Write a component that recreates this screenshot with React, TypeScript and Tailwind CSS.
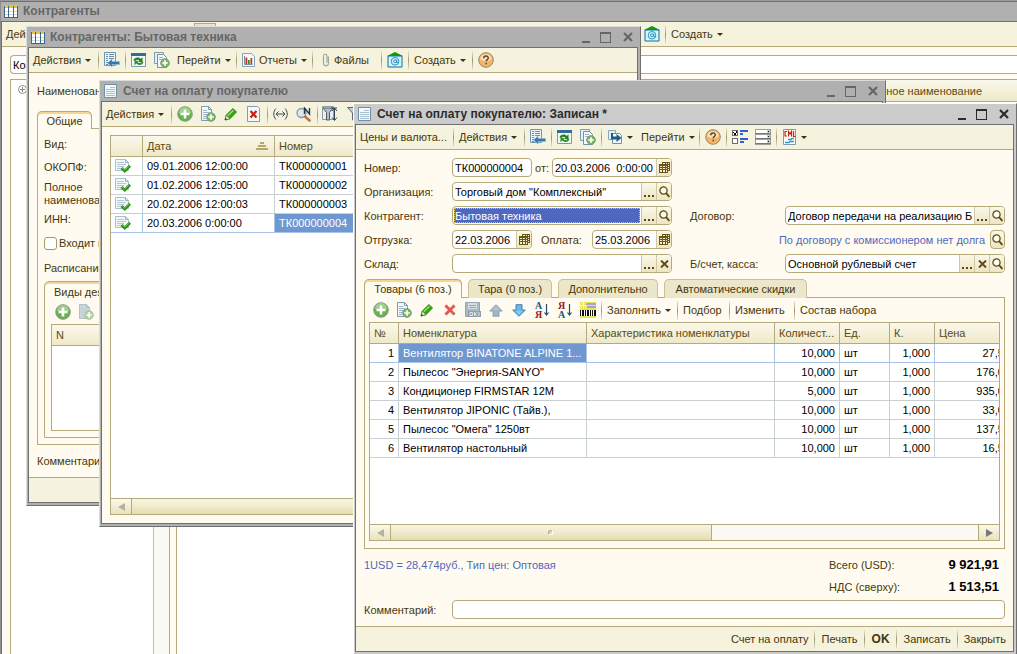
import type { ReactNode } from 'react';
import { clsx } from 'clsx';

type Item = { name: string; qty: string; price: string };
type Invoice = { date: string; number: string };

const items: Item[] = [
  { name: 'Вентилятор BINATONE ALPINE 1...', qty: '10,000', price: '27,50' },
  { name: 'Пылесос "Энергия-SANYO"', qty: '10,000', price: '176,00' },
  { name: 'Кондиционер FIRMSTAR 12М', qty: '5,000', price: '935,00' },
  { name: 'Вентилятор JIPONIC (Тайв.),', qty: '10,000', price: '33,00' },
  { name: 'Пылесос "Омега" 1250вт', qty: '10,000', price: '137,50' },
  { name: 'Вентилятор настольный', qty: '10,000', price: '16,50' },
];

const invoices: Invoice[] = [
  { date: '09.01.2006 12:00:00', number: 'ТК000000001' },
  { date: '01.02.2006 12:05:00', number: 'ТК000000002' },
  { date: '20.02.2006 12:00:03', number: 'ТК000000003' },
  { date: '20.03.2006 0:00:00', number: 'ТК000000004' },
];

// ---------- icons ----------

const TableIcon = () => (
  <svg width="14" height="14" viewBox="0 0 14 14" shapeRendering="crispEdges">
    <path d="M0 3h14v10H0z" fill="#fff" />
    <path d="M0 1h4v3H0zM5 1h4v3H5zM10 1h4v3h-4z" fill="#e9c33c" />
    <path d="M0 2h1v11H0zM4 2h1v11H4zM9 2h1v11H9zM13 2h1v11h-1zM0 13h14v1H0z" fill="#3f6582" />
    <path d="M1 7h3v1H1zM5 7h4v1H5zM10 7h3v1h-3zM1 10h3v1H1zM5 10h4v1H5zM10 10h3v1h-3z" fill="#c9dbe6" />
  </svg>
);

const DocIcon = () => (
  <svg width="14" height="14" viewBox="0 0 14 14">
    <path d="M.5.500h12v13H.5z" fill="#f3f8fb" stroke="#6e91a8" />
    <path d="M6 3.500h5M2 5.500h9M2 7.500h9M2 9.500h9M2 11.500h9" stroke="#a9c2d2" />
  </svg>
);

const PlusIcon = () => (
  <svg width="16" height="16" viewBox="0 0 16 16">
    <circle cx="8" cy="8" r="7.300" fill="#69b04f" stroke="#8a9a84" />
    <path d="M2 7a6 6 0 0 1 12 0c-3 2-8 0-12 0z" fill="#9fd08a" />
    <path d="M6.700 3.500h2.600v3.200h3.200v2.600H9.300v3.200H6.700V9.300H3.500V6.700h3.200z" fill="#fff" />
  </svg>
);

const CopyIcon = ({ dim = false }: { dim?: boolean }) => (
  <svg width="16" height="16" viewBox="0 0 16 16" opacity={dim ? 0.6 : 1}>
    <path d="M1.500.5h7l3 3v11h-10z" fill={dim ? '#a9bcc6' : '#f1f7fa'} stroke="#7d9db1" />
    <path d="M8.500.5v3h3" fill="none" stroke="#7d9db1" />
    <path d="M3 4.500h4M3 6.500h6M3 8.500h5M3 10.500h3M3 12.500h3" stroke="#9cb7c7" />
    <circle cx="11" cy="11" r="4.300" fill="#79b963" stroke="#81957a" />
    <path d="M11 8.200v5.600M8.200 11h5.600" stroke="#fff" strokeWidth="1.700" />
  </svg>
);

const CopiesIcon = () => (
  <svg width="16" height="16" viewBox="0 0 16 16">
    <path d="M.5.500h9v11h-9z" fill="#e6eff4" stroke="#7d9db1" />
    <path d="M3.500 2.500h6l3 3v10h-9z" fill="#f5f9fb" stroke="#6f93a9" />
    <path d="M5 5.500h4M5 7.500h6" stroke="#9cb7c7" />
    <circle cx="11" cy="11" r="4.300" fill="#79b963" stroke="#81957a" />
    <path d="M11 8.200v5.600M8.200 11h5.600" stroke="#fff" strokeWidth="1.700" />
  </svg>
);

const PencilIcon = () => (
  <svg width="14" height="14" viewBox="0 0 14 14">
    <path d="M1 13l1.300-5L9 1.500 12.500 5 6 11.700z" fill="#35a40e" stroke="#237a0a" strokeWidth=".8" />
    <path d="M3.300 8.200L9 2.800l1 1L4.300 9.300z" fill="#9ede76" />
    <path d="M1 13l1.300-5 3.700 3.700z" fill="#dcecc9" stroke="#237a0a" strokeWidth=".6" />
    <path d="M1 13l.6-2 1.400 1.400z" fill="#123c05" />
  </svg>
);

const CrossIcon = () => (
  <svg width="14" height="14" viewBox="0 0 14 14">
    <path d="M1.500 3.500l2-2L7 5l3.500-3.500 2 2L9 7l3.500 3.500-2 2L7 9l-3.500 3.500-2-2L5 7z" fill="#e2584b" stroke="#f0a59c" />
  </svg>
);

const DeleteMarkIcon = () => (
  <svg width="14" height="16" viewBox="0 0 14 16">
    <path d="M.5.500h10l2 2v13H.5z" fill="#f4f8fb" stroke="#7d9db1" />
    <path d="M3.500 5l6 6.500M9.500 5l-6 6.500" stroke="#cf1c12" strokeWidth="2.200" />
  </svg>
);

const ExportIcon = () => (
  <svg width="17" height="16" viewBox="0 0 17 16">
    <path d="M1.500.5h11v13h-11z" fill="#eef5f9" stroke="#7095ac" />
    <path d="M3 2.500h2M6 2.500h5M3 4.500h2M6 4.500h5M3 6.500h2M6 6.500h5M3 8.500h2M3 10.500h2M3 12.500h2" stroke="#6c8fa5" />
    <path d="M4.500 11L9 7v2.500h7.500v3H9V15z" fill="#2f79ad" stroke="#8fb9d6" strokeWidth=".6" />
  </svg>
);

const RefreshIcon = () => (
  <svg width="15" height="14" viewBox="0 0 15 14">
    <path d="M.5.500h14v13H.5z" fill="#f2f7fa" stroke="#7a9bb0" />
    <path d="M0 0h15v3H0z" fill="#2f6f97" />
    <path d="M2.500 7.800c.6-3.600 5-4.300 7.200-1.900L11.500 4.300V9H7.200l1.300-1.400C7.200 6.300 5.200 6.300 4.600 7.800z" fill="#237f1d" />
    <path d="M12.500 8.700c-.6 3.600-5 4.300-7.200 1.900L3.500 12.200V7.700h4L6.500 9c1.300 1.300 3.300 1.200 3.900-.3z" fill="#2f8f29" />
  </svg>
);

const GotoIcon = () => (
  <svg width="15" height="14" viewBox="0 0 15 14">
    <path d="M.5.500h7v9h-7z" fill="#e6eff4" stroke="#8aa8ba" />
    <path d="M4.500 3.500h7l2 2v8h-9z" fill="#f3f8fa" stroke="#6f93a9" />
    <path d="M3 3h2v3.500h3.500V4l5 4-5 4V9.500H3z" fill="#1e5d86" />
  </svg>
);

const ReportIcon = () => (
  <svg width="13" height="14" viewBox="0 0 13 14">
    <path d="M.5.500h9l3 3v10H.5z" fill="#f6fafc" stroke="#86a3b4" />
    <path d="M2.500 3v8.500h8" fill="none" stroke="#7b8f9b" />
    <path d="M3.500 4.500h1.800V11H3.500z" fill="#d02a1c" />
    <path d="M6 7h1.700v4H6z" fill="#2a8f29" />
    <path d="M8.500 5h1.700v6H8.500z" fill="#c2331f" />
  </svg>
);

const ClipIcon = () => (
  <svg width="8" height="14" viewBox="0 0 8 14">
    <path d="M6.500 3.500v6.700a2.300 2.300 0 0 1-5 0V3a1.700 1.700 0 0 1 3.500 0v6.800" fill="none" stroke="#a6a89b" strokeWidth="1.200" />
  </svg>
);

const MailIcon = () => (
  <svg width="16" height="16" viewBox="0 0 16 16">
    <path d="M1 4h14v11H1z" fill="#d3f7fb" stroke="#0f6f9c" />
    <path d="M0 4l8-4 8 4z" fill="#0b9a12" />
    <circle cx="8" cy="9.300" r="3.800" fill="none" stroke="#2384b8" strokeWidth=".9" />
    <circle cx="8" cy="9.300" r="1.500" fill="none" stroke="#2384b8" strokeWidth=".9" />
    <path d="M9.600 7.800v2.600h2" fill="none" stroke="#2384b8" strokeWidth=".9" />
  </svg>
);

const HelpIcon = () => (
  <svg width="16" height="16" viewBox="0 0 16 16">
    <circle cx="8" cy="8" r="7.300" fill="#f2b568" stroke="#a08568" />
    <path d="M2.200 7a5.900 5.900 0 0 1 11.600 0c-3 3-8 3-11.600 0z" fill="#fbdfb8" />
    <path d="M5.700 6.200C5.700 3.300 10.300 3.300 10.300 6c0 1.600-2.100 1.600-2.100 3.300M8.200 10.700v1.600" fill="none" stroke="#5e4632" strokeWidth="1.500" />
  </svg>
);

const WidthIcon = () => (
  <svg width="15" height="12" viewBox="0 0 15 12" fill="none" stroke="#3b4b58">
    <path d="M3 .5C0 3.500 0 8.500 3 11.500M12 .5c3 3 3 8 0 11M3 6h9M5.500 3.500L3 6l2.500 2.500M9.500 3.500L12 6 9.500 8.500" />
  </svg>
);

const FindIcon = () => (
  <svg width="16" height="15" viewBox="0 0 16 15">
    <circle cx="5.500" cy="6" r="4.500" fill="#dbe6ef" stroke="#8c99a6" strokeWidth="1.300" />
    <path d="M9 9.500l4.500 4" stroke="#b5794a" strokeWidth="2.600" strokeLinecap="round" />
    <path d="M8.500 7V1l5 6V1" fill="none" stroke="#1d3a50" strokeWidth="1.400" />
  </svg>
);

const FilterIcon = () => (
  <svg width="17" height="16" viewBox="0 0 17 16">
    <path d="M.5.500h11v13H.5z" fill="#e9f0f4" stroke="#8b9daa" />
    <path d="M1 2h10L7.500 6.500V14h-3V6.500z" fill="#b5bfc6" stroke="#4f5c66" />
    <path d="M9 2h6M12.500 2v12M10 5l2.500-3L15 5M10 11.500l2.500 3 2.500-3" fill="none" stroke="#33444f" />
  </svg>
);

const FunnelIcon = () => (
  <svg width="14" height="14" viewBox="0 0 14 14">
    <path d="M.5.500h13L8.500 6v7h-3V6z" fill="#c6ced4" stroke="#5c6972" />
  </svg>
);

const OptionsIcon = () => (
  <svg width="16" height="14" viewBox="0 0 16 14" shapeRendering="crispEdges">
    <path d="M.5.500h5v5h-5zM.5 8.500h5v5h-5z" fill="#fff" stroke="#6b6b6b" />
    <path d="M1.500 2.500l1.500 2 2-3.500" fill="none" stroke="#000" />
    <path d="M8 0h8v2H8zM8 3h3v2H8zM8 8h8v2H8zM8 11h4v2H8z" fill="#2b62d9" />
  </svg>
);

const ListIcon = () => (
  <svg width="16" height="16" viewBox="0 0 16 16" shapeRendering="crispEdges">
    <path d="M0 0h16v16H0z" fill="#a0a0a0" />
    <path d="M1 1h11v3H1zM1 6h11v3H1zM1 11h11v3H1z" fill="#fff" />
    <path d="M12 1h3v3h-3zM12 6h3v3h-3zM12 11h3v3h-3z" fill="#c9c9c9" />
    <path d="M13 2h1v1h-1zM13 7h1v1h-1zM13 12h1v1h-1z" fill="#111" />
    <path d="M0 4h16v1H0zM0 9h16v1H0zM0 14h16v1H0z" fill="#777" />
  </svg>
);

const CmlIcon = () => (
  <svg width="14" height="16" viewBox="0 0 14 16">
    <path d="M.5.500h12v15H.5z" fill="#fff" stroke="#7f9bab" />
    <path d="M4 2.500H2v4.500h2M5.500 7.500v-5l1.500 2.500 1.500-2.500v5M10.500 2v5.500h2" fill="none" stroke="#c8290a" strokeWidth="1.200" />
    <path d="M5 10.500h3l1-1h2M2 13.500h4l1-1h4" fill="none" stroke="#2798c9" strokeWidth="1.300" />
  </svg>
);

const SaveIcon = () => (
  <svg width="16" height="16" viewBox="0 0 16 16">
    <path d="M.5.500h14v14H.5z" fill="#a9b9c3" stroke="#93a6b2" />
    <path d="M3 1h9v6H3z" fill="#d4dde2" />
    <path d="M4 3.500h7M4 5.500h7" stroke="#9aabb6" />
    <path d="M3 9h13v6H3z" fill="#8d9fac" />
    <path d="M5 10.500h2.500v3H5zM9.500 10v4M12.500 10l-2.500 2 2.500 2M14 10v4" fill="none" stroke="#dfe6ea" />
  </svg>
);

const ArrowIcon = ({ down = false }: { down?: boolean }) => (
  <svg width="14" height="13" viewBox="0 0 14 13" className={down ? 'rotate-180' : ''}>
    <path d="M7 .7L13.300 7H10v5.300H4V7H.7z" fill={down ? '#6fb6e4' : '#a3b4c0'} stroke={down ? '#3f82b3' : '#8fa2b0'} />
    <path d="M7 2.500L10 6H4z" fill={down ? '#8ccbf0' : '#b9c6cf'} />
  </svg>
);

// А / Я sort glyphs
const SortIcon = ({ top, bottom }: { top: string; bottom: string }) => (
  <svg width="16" height="18" viewBox="0 0 16 18">
    <text x="1" y="8" fontSize="10" fontWeight="bold" fontFamily="Liberation Serif, serif" fill={top === 'А' ? '#1d5680' : '#9a1c1c'}>{top}</text>
    <text x="1" y="17" fontSize="10" fontWeight="bold" fontFamily="Liberation Serif, serif" fill={bottom === 'А' ? '#1d5680' : '#9a1c1c'}>{bottom}</text>
    <path d="M12.500 3v11M10.500 11.500l2 2.500 2-2.500" fill="none" stroke="#24506f" strokeWidth="1.200" />
  </svg>
);

const BarcodeIcon = () => (
  <svg width="16" height="16" viewBox="0 0 16 16" shapeRendering="crispEdges">
    <path d="M0 0h16v16H0z" fill="#e8e35a" />
    <path d="M6 1h10v2H6zM7 4h9v2H7z" fill="#a9a4c9" />
    <path d="M3 0h1v7H3zM0 3h7v1H0zM1 1h1v1H1zM5 1h1v1H5zM1 5h1v1H1zM5 5h1v1H5z" fill="#fffce0" />
    <path d="M0 8h16v6H0z" fill="#fff" />
    <path d="M0 8h1v6H0zM2 8h2v6H2zM5 8h1v6H5zM7 8h2v6H7zM10 8h1v6h-1zM12 8h1v6h-1zM14 8h2v6h-2z" fill="#111" />
  </svg>
);

const CalendarIcon = () => (
  <svg width="11" height="12" viewBox="0 0 11 12" shapeRendering="crispEdges">
    <path d="M3 0h8v9H9v2H0V2h3z" fill="#6b5414" />
    <path d="M1 4h2v1H1zM4 4h2v1H4zM7 4h1v1H7zM1 6h2v1H1zM4 6h2v1H4zM7 6h1v1H7zM1 8h2v2H1zM4 8h2v2H4zM7 8h1v2H7zM4 1h2v1H4zM7 1h1v1H7zM9 1h1v1H9zM9 3h1v1H9zM9 5h1v1H9zM9 7h1v1H9z" fill="#f6efcf" />
  </svg>
);

const LensIcon = () => (
  <svg width="11" height="12" viewBox="0 0 11 12" fill="none" stroke="#5e4a0e">
    <circle cx="4.500" cy="4.500" r="3.600" strokeWidth="1.300" fill="#fffdf0" />
    <path d="M7 7l3.300 4" strokeWidth="1.900" />
  </svg>
);

const ClearIcon = () => (
  <svg width="9" height="8" viewBox="0 0 9 8" stroke="#5e4a0e" strokeWidth="1.900">
    <path d="M1 .5l7 7M8 .5l-7 7" />
  </svg>
);

const DotsIcon = () => (
  <svg width="10" height="12" viewBox="0 0 10 12" shapeRendering="crispEdges">
    <path d="M0 9h2v2H0zM4 9h2v2H4zM8 9h2v2H8z" fill="#5e4a0e" />
  </svg>
);

const PostedIcon = () => (
  <svg width="16" height="15" viewBox="0 0 16 15">
    <path d="M.5.500h10l3 3v8H.5z" fill="#f3f8fb" stroke="#a9c0ce" />
    <path d="M10.500.5v3h3" fill="none" stroke="#93aebf" />
    <path d="M2 3.500h7M2 5.500h9M2 7.500h7M2 9.500h4" stroke="#b4c8d4" />
    <path d="M6.500 9l3.300 3L15 6.800" fill="none" stroke="#2c8f16" strokeWidth="2.800" />
    <path d="M7 8.700l2.800 2.400 4.700-4.500" fill="none" stroke="#6ec64c" />
  </svg>
);

const SortMark = () => (
  <svg width="12" height="8" viewBox="0 0 12 8" shapeRendering="crispEdges" fill="#b3a76c">
    <path d="M4 0h4v2H4zM2 3h8v2H2zM0 6h12v2H0z" />
  </svg>
);

const Caret = () => (
  <svg width="6" height="3" viewBox="0 0 6 3" className="ml-1 shrink-0" fill="#3f3208">
    <path d="M0 0h6L3 3z" />
  </svg>
);

// ---------- shared parts ----------

const Sep = () => (
  <span className="flex h-full w-1 shrink-0 items-center justify-center">
    <span className="h-[19px] w-px bg-linear-to-b from-[#ece7cc] via-[#a0976a] to-[#ece7cc]" />
  </span>
);

const IconBtn = ({ label, children }: { label: string; children: ReactNode }) => (
  <button aria-label={label} className="flex h-5 w-[23px] shrink-0 items-center justify-center">
    {children}
  </button>
);

type TextBtnProps = { children: ReactNode; icon?: ReactNode; menu?: boolean; className?: string };

const TextBtn = ({ children, icon, menu = false, className }: TextBtnProps) => (
  <button className={clsx('flex h-5 shrink-0 items-center whitespace-nowrap', className)}>
    {icon && <span className="mr-1">{icon}</span>}
    {children}
    {menu && <Caret />}
  </button>
);

const Toolbar = ({ children }: { children: ReactNode }) => (
  <div className="flex h-[25px] shrink-0 items-center overflow-hidden border-b border-[#b4aa7c] bg-[#f5f2dd]">
    {children}
  </div>
);

const WindowButtons = () => (
  <div className="ml-auto flex items-center gap-2 pr-[5px]">
    <button aria-label="Свернуть" className="flex h-3 w-3 items-end justify-center">
      <span className="h-[2px] w-2 bg-current" />
    </button>
    <button aria-label="Развернуть" className="h-[11px] w-[11px] border border-t-2 border-current" />
    <button aria-label="Закрыть" className="ml-1">
      <svg width="10" height="10" viewBox="0 0 10 10" stroke="currentColor" strokeWidth="2.200">
        <path d="M1 1l8 8M9 1L1 9" />
      </svg>
    </button>
  </div>
);

type WindowProps = { title: string; icon: ReactNode; active?: boolean; className: string; children: ReactNode };

const Window = ({ title, icon, active = false, className, children }: WindowProps) => (
  <section
    className={clsx(
      'absolute flex flex-col border-t border-r border-l border-r-[#707070] pr-[2px] pb-[2px] pl-px',
      active
        ? 'border-t-white border-l-white bg-[#cbcbcb]'
        : 'border-b border-t-[#dcdcdc] border-b-[#707070] border-l-[#dcdcdc] bg-[#b0b0b0]',
      className,
    )}
  >
    <header className={clsx('flex h-5 shrink-0 items-center pl-[3px]', active ? 'text-[#2b2b2b]' : 'text-[#666]')}>
      {icon}
      <h2 className="ml-[5px] text-xs font-bold whitespace-nowrap">{title}</h2>
      <WindowButtons />
    </header>
    <div className="flex min-h-0 flex-1 flex-col border border-[#707070] bg-[#fffbf0]">{children}</div>
  </section>
);

const ScrollArrow = ({ right = false }: { right?: boolean }) => (
  <button
    aria-label={right ? 'Вправо' : 'Влево'}
    className={clsx(
      'flex w-[21px] shrink-0 items-center justify-center border-[#b4aa7c] bg-linear-to-b from-[#fbf9ec] to-[#e9e2bd]',
      right ? 'border-l' : 'border-r',
    )}
  >
    <svg width="7" height="8" viewBox="0 0 7 8" fill={right ? '#777' : '#b5b2a4'}>
      <path d={right ? 'M0 0l7 4-7 4z' : 'M7 0L0 4l7 4z'} />
    </svg>
  </button>
);

type FieldButton = 'dots' | 'lens' | 'clear' | 'calendar';

const fieldIcons: Record<FieldButton, { label: string; icon: ReactNode }> = {
  dots: { label: 'Выбрать', icon: <DotsIcon /> },
  lens: { label: 'Открыть', icon: <LensIcon /> },
  clear: { label: 'Очистить', icon: <ClearIcon /> },
  calendar: { label: 'Календарь', icon: <CalendarIcon /> },
};

type FieldProps = {
  id: string;
  value?: string;
  label?: string;
  buttons?: FieldButton[];
  selected?: boolean;
  className?: string;
};

const Field = ({ id, value = '', label, buttons = [], selected = false, className }: FieldProps) => (
  <div className={clsx('flex h-[19px] overflow-hidden rounded-[4px] border border-[#b4aa7c] bg-white', className)}>
    <input
      id={id}
      aria-label={label}
      defaultValue={value}
      className={clsx(
        'min-w-0 flex-1 outline-none',
        selected ? 'm-px border border-dotted border-[#d8c25a] bg-[#4f68bf] text-white' : 'px-[2px] text-black',
      )}
    />
    {buttons.map((b) => (
      <button
        key={b}
        aria-label={fieldIcons[b].label}
        className="flex w-[15px] shrink-0 items-center justify-center border-l border-[#cfc8a0] bg-linear-to-b from-[#fbf8e8] to-[#ece5c4]"
      >
        {fieldIcons[b].icon}
      </button>
    ))}
  </div>
);

const Row = ({ id, label, width, children }: { id: string; label: string; width: string; children: ReactNode }) => (
  <div className="flex h-[19px] items-center">
    <label htmlFor={id} className={clsx('shrink-0', width)}>{label}</label>
    {children}
  </div>
);

const th =
  'h-[21px] overflow-hidden border-r border-b border-[#b4aa7c] bg-linear-to-b from-[#faf8ec] to-[#efe9c8] pl-1 text-left font-normal whitespace-nowrap text-[#5c4a10]';
const td = 'h-[19px] overflow-hidden border-r border-b pl-1 whitespace-nowrap text-black';

// ---------- windows ----------

const Counterparties = () => (
  <div className="flex h-full flex-col border-l border-[#8e8e8e] bg-[#b0b0b0]">
    <header className="flex h-[21px] shrink-0 items-center border-t border-[#9a9a9a] pl-[3px] text-[#666] shadow-[inset_0_1px_0_#707070]">
      <TableIcon />
      <h1 className="ml-[5px] text-xs font-bold">Контрагенты</h1>
    </header>
    <div className="flex min-h-0 flex-1 flex-col border-t border-l border-[#707070] bg-[#fffbf0]">
      <Toolbar>
        <TextBtn menu className="w-[192px] pl-1">Действия</TextBtn>
        <button aria-label="Иерархия" className="h-[22px] w-[22px] border border-[#b4aa7c] bg-[#ebe4c6]" />
        <span className="w-[424px]" />
        <IconBtn label="Письмо"><MailIcon /></IconBtn>
        <Sep />
        <TextBtn menu className="px-1">Создать</TextBtn>
      </Toolbar>
      <div className="pt-2 pb-[5px] pl-2">
        <Field id="search" label="Поиск" value="Контрагенты" className="rounded-r-none border-r-0" />
      </div>
      <div className="flex min-h-0 flex-1 pl-2">
        <div className="flex w-[160px] shrink-0 border border-b-0 border-[#b4aa7c] bg-white">
          <div className="flex-1 pt-[5px] pl-[7px]">
            <svg width="9" height="9" viewBox="0 0 9 9" fill="none" stroke="#8d8d8d">
              <circle cx="4.500" cy="4.500" r="4" />
              <path d="M2 4.500h5M4.500 2v5" />
            </svg>
          </div>
          <div className="w-4 border-l border-[#c3bc95] bg-[#faf9f3]" />
        </div>
        <div className="ml-[6px] flex-1 border-t border-l border-[#b4aa7c] bg-white">
          <div className="flex h-[22px] items-center justify-end border-b border-[#b4aa7c] bg-linear-to-b from-[#faf8ec] to-[#efe9c8] pr-[35px] text-[#5c4a10]">
            Полное наименование
          </div>
        </div>
      </div>
    </div>
  </div>
);

const CounterpartyCard = () => (
  <Window title="Контрагенты: Бытовая техника" icon={<TableIcon />} className="top-[26px] left-[26px] h-[480px] w-[615px]">
    <Toolbar>
      <TextBtn menu className="w-[67px] pl-1">Действия</TextBtn>
      <Sep />
      <IconBtn label="Записать и закрыть"><ExportIcon /></IconBtn>
      <Sep />
      <IconBtn label="Обновить"><RefreshIcon /></IconBtn>
      <IconBtn label="Скопировать"><CopiesIcon /></IconBtn>
      <TextBtn menu className="w-[61px] pl-1">Перейти</TextBtn>
      <Sep />
      <TextBtn menu icon={<ReportIcon />} className="w-[72px] pl-1">Отчеты</TextBtn>
      <Sep />
      <TextBtn icon={<ClipIcon />} className="w-[65px] pl-2">Файлы</TextBtn>
      <Sep />
      <IconBtn label="Письмо"><MailIcon /></IconBtn>
      <Sep />
      <TextBtn menu className="w-[60px] pl-1">Создать</TextBtn>
      <Sep />
      <IconBtn label="Справка"><HelpIcon /></IconBtn>
    </Toolbar>
    <div className="flex min-h-0 flex-1 flex-col px-2 pt-2">
      <label htmlFor="cp-name" className="h-[30px] leading-5">Наименование:</label>
      <div className="flex h-[18px]">
        <button className="w-[55px] rounded-t-[5px] border border-b-0 border-[#b4aa7c] bg-[#fffbf0] shadow-[inset_0_2px_0_#f7d592]">
          Общие
        </button>
        <span className="flex-1 border-b border-[#b4aa7c]" />
      </div>
      <div className="flex flex-1 flex-col border border-t-0 border-[#b4aa7c] px-[6px] pb-[6px]">
        <span className="mt-[7px] leading-4">Вид:</span>
        <span className="mt-[7px] leading-4">ОКОПФ:</span>
        <span className="mt-[6px] w-[80px] leading-[13px]">Полное наименование:</span>
        <span className="mt-1 leading-4">ИНН:</span>
        <label className="mt-2 flex items-center gap-[2px] leading-4 whitespace-nowrap">
          <input type="checkbox" className="h-[13px] w-[13px] appearance-none rounded-[3px] border border-[#a49a68] bg-white" />
          Входит в холдинг
        </label>
        <span className="mt-[9px] leading-4">Расписание работы:</span>
        <div className="mt-[5px] flex flex-1 flex-col rounded-tl-[5px] border border-[#b4aa7c] px-[6px] pb-[6px] shadow-[inset_0_2px_0_#f3d69b]">
          <span className="pt-[2px] pl-[3px] leading-4">Виды деятельности</span>
          <div className="flex h-6 items-center">
            <IconBtn label="Добавить"><PlusIcon /></IconBtn>
            <IconBtn label="Скопировать"><CopyIcon dim /></IconBtn>
          </div>
          <div className="flex-1 border border-[#b4aa7c] bg-white">
            <div className="flex h-[21px] items-center border-b border-[#b4aa7c] bg-linear-to-b from-[#faf8ec] to-[#efe9c8] pl-1 text-[#5c4a10]">N</div>
          </div>
        </div>
      </div>
      <span className="flex h-8 items-center">Комментарий:</span>
    </div>
    <div className="h-[25px] shrink-0 border-t border-[#b4aa7c] bg-[#f5f2dd]" />
  </Window>
);

const InvoiceList = () => (
  <Window title="Счет на оплату покупателю" icon={<DocIcon />} className="top-[80px] left-[99px] h-[447px] w-[787px]">
    <Toolbar>
      <TextBtn menu className="w-[67px] pl-1">Действия</TextBtn>
      <Sep />
      <IconBtn label="Добавить"><PlusIcon /></IconBtn>
      <IconBtn label="Скопировать"><CopyIcon /></IconBtn>
      <IconBtn label="Изменить"><PencilIcon /></IconBtn>
      <IconBtn label="Пометить на удаление"><DeleteMarkIcon /></IconBtn>
      <Sep />
      <IconBtn label="Интервал"><WidthIcon /></IconBtn>
      <IconBtn label="Найти по номеру"><FindIcon /></IconBtn>
      <Sep />
      <IconBtn label="Отбор и сортировка"><FilterIcon /></IconBtn>
      <IconBtn label="Отбор"><FunnelIcon /></IconBtn>
    </Toolbar>
    <div className="flex min-h-0 flex-1 flex-col p-2">
      <div className="flex min-h-0 flex-1 flex-col border border-[#b4aa7c] bg-white">
        <table className="w-full table-fixed border-separate border-spacing-0">
          <colgroup>
            <col className="w-8" />
            <col className="w-[132px]" />
            <col />
          </colgroup>
          <thead>
            <tr>
              <th className={th} aria-label="Статус" />
              <th className={th}>
                <span className="flex items-center justify-between pr-[6px]">Дата <SortMark /></span>
              </th>
              <th className={th}>Номер</th>
            </tr>
          </thead>
          <tbody>
            {invoices.map((inv, i) => {
              const current = i === invoices.length - 1;
              const line = current ? 'border-[#a9c3e8]' : 'border-[#c8d0d4]';
              return (
                <tr key={inv.number}>
                  <td className={clsx(td, line)}><PostedIcon /></td>
                  <td className={clsx(td, line)}>{inv.date}</td>
                  <td className={clsx(td, line, current && 'bg-[#7098d0] text-white!')}>{inv.number}</td>
                </tr>
              );
            })}
          </tbody>
        </table>
        <div className="mt-auto flex h-4 border-t border-[#b4aa7c]">
          <ScrollArrow />
          <div className="flex-1 bg-linear-to-b from-[#f8f5e4] via-[#f0ebcb] to-[#e3dbb0]" />
        </div>
      </div>
    </div>
  </Window>
);

const tabs = [
  { name: 'Товары (6 поз.)', width: 'w-[98px]' },
  { name: 'Тара (0 поз.)', width: 'w-[84px]' },
  { name: 'Дополнительно', width: 'w-[100px]' },
  { name: 'Автоматические скидки', width: 'w-[143px]' },
];

const InvoiceForm = () => (
  <Window
    active
    title="Счет на оплату покупателю: Записан *"
    icon={<DocIcon />}
    className="top-[103px] right-0 bottom-0 left-[353px]"
  >
    <Toolbar>
      <TextBtn className="w-[95px] pl-1">Цены и валюта...</TextBtn>
      <Sep />
      <TextBtn menu className="w-[67px] pl-1">Действия</TextBtn>
      <Sep />
      <IconBtn label="Записать и закрыть"><ExportIcon /></IconBtn>
      <Sep />
      <IconBtn label="Обновить"><RefreshIcon /></IconBtn>
      <IconBtn label="Скопировать"><CopiesIcon /></IconBtn>
      <Sep />
      <button aria-label="Ввести на основании" className="flex w-[34px] items-center pl-[5px]"><GotoIcon /><Caret /></button>
      <TextBtn menu className="w-[60px] pl-1">Перейти</TextBtn>
      <Sep />
      <IconBtn label="Справка"><HelpIcon /></IconBtn>
      <Sep />
      <IconBtn label="Настройка"><OptionsIcon /></IconBtn>
      <IconBtn label="Список"><ListIcon /></IconBtn>
      <Sep />
      <button aria-label="CommerceML" className="flex items-center pl-[5px]"><CmlIcon /><Caret /></button>
    </Toolbar>

    <div className="flex min-h-0 flex-1 flex-col px-2 pt-2">
      <div className="flex justify-between">
        <div className="flex flex-col gap-[5px]">
          <Row id="number" label="Номер:" width="w-[88px]">
            <Field id="number" value="ТК000000004" className="w-[80px]" />
            <label htmlFor="date" className="w-5 pl-[3px]">от:</label>
            <Field id="date" value="20.03.2006  0:00:00" buttons={['calendar']} className="w-[120px]" />
          </Row>
          <Row id="org" label="Организация:" width="w-[88px]">
            <Field id="org" value={'Торговый дом "Комплексный"'} buttons={['dots', 'lens']} className="w-[220px]" />
          </Row>
          <Row id="partner" label="Контрагент:" width="w-[88px]">
            <Field id="partner" value="Бытовая техника" selected buttons={['dots', 'lens']} className="w-[220px]" />
          </Row>
          <Row id="shipment" label="Отгрузка:" width="w-[88px]">
            <Field id="shipment" value="22.03.2006" buttons={['calendar']} className="w-[80px]" />
            <label htmlFor="payment" className="w-[60px] pl-[9px]">Оплата:</label>
            <Field id="payment" value="25.03.2006" buttons={['calendar']} className="w-[80px]" />
          </Row>
          <Row id="store" label="Склад:" width="w-[88px]">
            <Field id="store" buttons={['dots', 'clear']} className="w-[220px]" />
          </Row>
        </div>
        <div className="flex flex-col justify-end gap-[5px]">
          <Row id="contract" label="Договор:" width="w-[95px]">
            <Field id="contract" value="Договор передачи на реализацию Б" buttons={['dots', 'lens']} className="w-[220px]" />
          </Row>
          <div className="flex h-[19px] items-center justify-end gap-[5px]">
            <a href="#debt" className="text-[#4f68bf]">По договору с комиссионером нет долга</a>
            <button aria-label="Открыть" className="flex h-[19px] w-[15px] items-center justify-center rounded-[4px] border border-[#b4aa7c] bg-linear-to-b from-[#fbf8e8] to-[#ece5c4]">
              <LensIcon />
            </button>
          </div>
          <Row id="account" label="Б/счет, касса:" width="w-[95px]">
            <Field id="account" value="Основной рублевый счет" buttons={['dots', 'clear', 'lens']} className="w-[220px]" />
          </Row>
        </div>
      </div>

      <div className="mt-[6px] flex h-[19px]" role="tablist">
        {tabs.map((tab, i) => (
          <div key={tab.name} className="flex">
            <button
              role="tab"
              aria-selected={i === 0}
              className={clsx(
                'rounded-t-[5px] border border-b-0 text-center whitespace-nowrap',
                tab.width,
                i === 0
                  ? 'border-[#b4aa7c] bg-[#fffbf0] shadow-[inset_0_2px_0_#f7d592]'
                  : 'border-b border-[#c9c097] border-b-[#b4aa7c] bg-[#ece6cb]',
              )}
            >
              {tab.name}
            </button>
            <span className="w-[6px] border-b border-[#b4aa7c]" />
          </div>
        ))}
        <span className="flex-1 border-b border-[#b4aa7c]" />
      </div>

      <div className="flex min-h-0 flex-1 flex-col border border-t-0 border-[#b4aa7c] px-1 pb-[7px]">
        <div className="flex h-[24px] shrink-0 items-center">
          <IconBtn label="Добавить"><PlusIcon /></IconBtn>
          <IconBtn label="Скопировать"><CopyIcon /></IconBtn>
          <IconBtn label="Изменить"><PencilIcon /></IconBtn>
          <IconBtn label="Удалить"><CrossIcon /></IconBtn>
          <IconBtn label="Закончить редактирование"><SaveIcon /></IconBtn>
          <IconBtn label="Вверх"><ArrowIcon /></IconBtn>
          <IconBtn label="Вниз"><ArrowIcon down /></IconBtn>
          <IconBtn label="По возрастанию"><SortIcon top="А" bottom="Я" /></IconBtn>
          <IconBtn label="По убыванию"><SortIcon top="Я" bottom="А" /></IconBtn>
          <IconBtn label="Штрихкод"><BarcodeIcon /></IconBtn>
          <Sep />
          <TextBtn menu className="w-[72px] pl-1">Заполнить</TextBtn>
          <Sep />
          <TextBtn className="w-[48px] pl-1">Подбор</TextBtn>
          <Sep />
          <TextBtn className="w-[61px] pl-1">Изменить</TextBtn>
          <Sep />
          <TextBtn className="pl-1">Состав набора</TextBtn>
        </div>
        <div className="flex min-h-0 flex-1 flex-col overflow-hidden border border-[#b4aa7c] bg-white">
          <table className="w-[calc(100%+16px)] table-fixed border-separate border-spacing-0">
            <colgroup>
              <col className="w-[29px]" />
              <col className="w-[188px]" />
              <col />
              <col className="w-[65px]" />
              <col className="w-[50px]" />
              <col className="w-[45px]" />
              <col className="w-[80px]" />
            </colgroup>
            <thead>
              <tr>
                <th className={th}>№</th>
                <th className={th}>Номенклатура</th>
                <th className={th}>Характеристика номенклатуры</th>
                <th className={th}>Количест...</th>
                <th className={th}>Ед.</th>
                <th className={th}>К.</th>
                <th className={th}>Цена</th>
              </tr>
            </thead>
            <tbody>
              {items.map((item, i) => {
                const line = i === 0 ? 'border-[#a9c3e8]' : 'border-[#c8d0d4]';
                return (
                  <tr key={item.name}>
                    <td className={clsx(td, line, 'pr-1 text-right')}>{i + 1}</td>
                    <td className={clsx(td, line, i === 0 && 'bg-[#7098d0] text-white!')}>{item.name}</td>
                    <td className={clsx(td, line)} />
                    <td className={clsx(td, line, 'pr-1 text-right')}>{item.qty}</td>
                    <td className={clsx(td, line)}>шт</td>
                    <td className={clsx(td, line, 'pr-1 text-right')}>1,000</td>
                    <td className={clsx(td, line, 'pr-1 text-right')}>{item.price}</td>
                  </tr>
                );
              })}
            </tbody>
          </table>
          <div className="mt-auto flex h-4 shrink-0 border-t border-[#b4aa7c] bg-[#faf9f3]">
            <ScrollArrow />
            <div className="flex w-[51%] items-center justify-center border-r border-[#b4aa7c] bg-linear-to-b from-[#f8f5e4] via-[#f0ebcb] to-[#e3dbb0]">
              <span className="h-[5px] w-[5px] rounded-full border border-[#b3ab85] border-r-white border-b-white bg-[#ddd6b3]" />
            </div>
            <span className="flex-1" />
            <ScrollArrow right />
          </div>
        </div>
      </div>

      <div className="mt-[5px] flex justify-between pr-[6px]">
        <a href="#prices" className="leading-[22px] text-[#4f68bf]">1USD = 28,474руб., Тип цен: Оптовая</a>
        <dl className="grid w-[170px] grid-cols-2 leading-[22px]">
          <dt>Всего (USD):</dt>
          <dd className="text-right text-[13px] font-bold text-black">9 921,91</dd>
          <dt>НДС (сверху):</dt>
          <dd className="text-right text-[13px] font-bold text-black">1 513,51</dd>
        </dl>
      </div>
      <div className="mt-[2px] mb-[7px] flex items-center">
        <label htmlFor="comment" className="w-[88px]">Комментарий:</label>
        <Field id="comment" className="flex-1" />
      </div>
    </div>

    <footer className="flex h-[25px] shrink-0 items-center justify-end border-t border-[#b4aa7c] bg-[#f5f2dd] pr-[3px]">
      <TextBtn className="px-1">Счет на оплату</TextBtn>
      <Sep />
      <TextBtn className="px-[5px]">Печать</TextBtn>
      <Sep />
      <TextBtn className="px-[5px] text-xs font-bold">OK</TextBtn>
      <Sep />
      <TextBtn className="px-[5px]">Записать</TextBtn>
      <Sep />
      <TextBtn className="px-1">Закрыть</TextBtn>
    </footer>
  </Window>
);

export default function App() {
  return (
    <main className="relative h-screen overflow-hidden bg-[#b0b0b0] font-['Liberation_Sans',Arial,sans-serif] text-[11px] leading-4 text-[#45370b]">
      <Counterparties />
      <CounterpartyCard />
      <InvoiceList />
      <InvoiceForm />
    </main>
  );
}
